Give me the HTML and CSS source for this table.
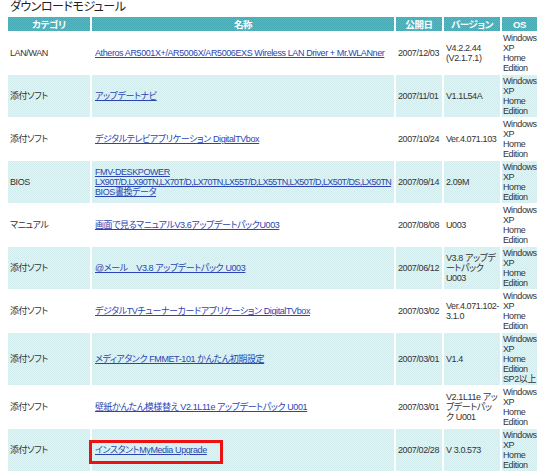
FILE: index.html
```html
<!DOCTYPE html>
<html lang="ja">
<head>
<meta charset="utf-8">
<title>ダウンロードモジュール</title>
<link rel="stylesheet" href="styles.css">
</head>
<body>
<div class="page">
  <h1 class="title">ダウンロードモジュール</h1>
  <table class="dl">
    <colgroup>
      <col class="c-cat"><col class="c-name"><col class="c-date"><col class="c-ver"><col class="c-os">
    </colgroup>
    <thead>
      <tr><th>カテゴリ</th><th>名称</th><th>公開日</th><th>バージョン</th><th>OS</th></tr>
    </thead>
    <tbody>
      <tr>
        <td>LAN/WAN</td>
        <td class="name"><a href="#">Atheros AR5001X+/AR5006X/AR5006EXS Wireless LAN Driver + Mr.WLANner</a></td>
        <td>2007/12/03</td>
        <td>V4.2.2.44<br>(V2.1.7.1)</td>
        <td class="os">Windows<br>XP<br>Home<br>Edition</td>
      </tr>
      <tr class="alt">
        <td>添付ソフト</td>
        <td class="name"><a href="#">アップデートナビ</a></td>
        <td>2007/11/01</td>
        <td>V1.1L54A</td>
        <td class="os">Windows<br>XP<br>Home<br>Edition</td>
      </tr>
      <tr>
        <td>添付ソフト</td>
        <td class="name"><a href="#">デジタルテレビアプリケーション DigitalTVbox</a></td>
        <td>2007/10/24</td>
        <td>Ver.4.071.103</td>
        <td class="os">Windows<br>XP<br>Home<br>Edition</td>
      </tr>
      <tr class="alt">
        <td>BIOS</td>
        <td class="name"><a href="#">FMV-DESKPOWER<br><span class="tight">LX90T/D,LX90TN,LX70T/D,LX70TN,LX55T/D,LX55TN,LX50T/D,LX50T/DS,LX50TN</span><br>BIOS書換データ</a></td>
        <td>2007/09/14</td>
        <td>2.09M</td>
        <td class="os">Windows<br>XP<br>Home<br>Edition</td>
      </tr>
      <tr>
        <td>マニュアル</td>
        <td class="name"><a href="#">画面で見るマニュアルV3.6アップデートパックU003</a></td>
        <td>2007/08/08</td>
        <td>U003</td>
        <td class="os">Windows<br>XP<br>Home<br>Edition</td>
      </tr>
      <tr class="alt">
        <td>添付ソフト</td>
        <td class="name"><a href="#">@メール　V3.8 アップデートパック U003</a></td>
        <td>2007/06/12</td>
        <td>V3.8 アップデ<br>ートパック<br>U003</td>
        <td class="os">Windows<br>XP<br>Home<br>Edition</td>
      </tr>
      <tr>
        <td>添付ソフト</td>
        <td class="name"><a href="#">デジタルTVチューナーカードアプリケーション DigitalTVbox</a></td>
        <td>2007/03/02</td>
        <td>Ver.4.071.102-<br>3.1.0</td>
        <td class="os">Windows<br>XP<br>Home<br>Edition</td>
      </tr>
      <tr class="alt">
        <td>添付ソフト</td>
        <td class="name"><a href="#">メディアタンク FMMET-101 かんたん初期設定</a></td>
        <td>2007/03/01</td>
        <td>V1.4</td>
        <td class="os">Windows<br>XP<br>Home<br>Edition<br>SP2以上</td>
      </tr>
      <tr>
        <td>添付ソフト</td>
        <td class="name"><a href="#">壁紙かんたん模様替え V2.1L11e アップデートパック U001</a></td>
        <td>2007/03/01</td>
        <td>V2.1L11e アッ<br>プデートパッ<br>ク U001</td>
        <td class="os">Windows<br>XP<br>Home<br>Edition</td>
      </tr>
      <tr class="alt">
        <td>添付ソフト</td>
        <td class="name"><span class="hl"><a href="#">インスタントMyMedia Upgrade</a></span></td>
        <td>2007/02/28</td>
        <td>V 3.0.573</td>
        <td class="os">Windows<br>XP<br>Home<br>Edition</td>
      </tr>
    </tbody>
  </table>
</div>
</body>
</html>
```

FILE: styles.css
```css
html, body {
  margin: 0;
  padding: 0;
  background: #ffffff;
  overflow: hidden;
}

.page {
  padding-left: 6px;
  font-family: "Liberation Sans", "Noto Sans CJK JP", sans-serif;
  font-feature-settings: "palt";
  color: #333333;
}

.title {
  margin: 0 0 0 4px;
  height: 16px;
  font-size: 12px;
  line-height: 15px;
  font-weight: normal;
  color: #222222;
  letter-spacing: -0.5px;
}

.dl {
  border-collapse: separate;
  border-spacing: 2px 1px;
  table-layout: fixed;
  width: 533px;
  font-size: 9px;
  letter-spacing: -0.4px;
}

.c-cat { width: 82px; }
.c-name { width: 302px; }
.c-date { width: 46px; }
.c-ver { width: 56px; }
.c-os { width: 35px; }

.dl th {
  height: 13px;
  padding: 1px 0 0;
  line-height: 12px;
  font-size: 9.5px;
  font-weight: bold;
  color: #ffffff;
  text-align: center;
  background: repeating-conic-gradient(#46aab5 0 25%, #5cb6c0 0 50%) 0 0 / 2px 2px;
}

.dl td {
  padding: 1px 1px 1px 2px;
  line-height: 10px;
  vertical-align: middle;
  white-space: nowrap;
  overflow: visible;
}

.dl td.name {
  padding-left: 3px;
}

.dl td.os {
  padding-left: 1px;
  height: 40px;
}

.dl tr.alt td {
  background: repeating-conic-gradient(#d3ecee 0 25%, #e2f3f4 0 50%) 0 0 / 2px 2px;
}

.dl a {
  color: #2a45b3;
  text-decoration: underline;
}

.tight {
  letter-spacing: -0.58px;
}

.hl {
  position: relative;
}

.hl::after {
  content: "";
  position: absolute;
  left: -6px;
  top: -5px;
  width: 128px;
  height: 18px;
  border: 3px solid #ee1111;
}
```
